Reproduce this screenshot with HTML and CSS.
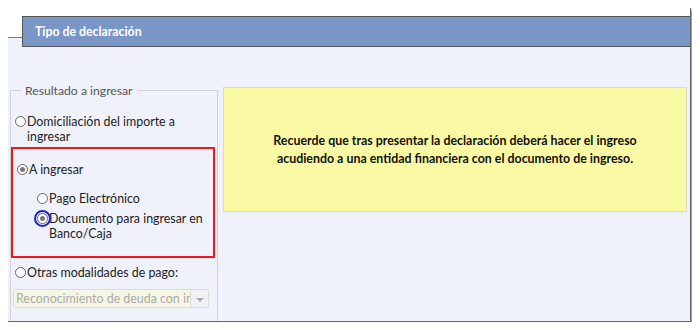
FILE: index.html
```html
<!DOCTYPE html>
<html>
<head>
  <title>Tipo de declaración</title>
  <link rel="stylesheet" href="styles.css">
</head>
<body>
  <div class="window">
    <div class="tabrow">
      <div class="tab">Tipo de declaración</div>
    </div>
    <div class="content">
      <fieldset class="result">
        <legend>Resultado a ingresar</legend>
        <div class="opt"><span class="radio"></span><span>Domiciliación del importe a ingresar</span></div>
        <div class="highlight">
          <div class="opt"><span class="radio on"></span><span>A ingresar</span></div>
          <div class="sub">
            <div class="opt"><span class="radio"></span><span>Pago Electrónico</span></div>
            <div class="opt"><span class="radio on ring"></span><span>Documento para ingresar en Banco/Caja</span></div>
          </div>
        </div>
        <div class="opt"><span class="radio"></span><span>Otras modalidades de pago:</span></div>
        <div class="select">
          <span class="select-text">Reconocimiento de deuda con in</span>
          <span class="select-arrow"></span>
        </div>
      </fieldset>
      <div class="notice">
        <p>Recuerde que tras presentar la declaración deberá hacer el ingreso<br>acudiendo a una entidad financiera con el documento de ingreso.</p>
      </div>
    </div>
  </div>
</body>
</html>
```

FILE: styles.css
```css
* {
  font-family: 'Lato', 'Open Sans', sans-serif;
  box-sizing: border-box;
}
body {
  margin: 8px;
  background: #fff;
}
.window {
  width: 683px;
  height: 314px;
  background: #eff2fa;
  border-right: 1px solid #666;
  border-bottom: 1px solid #666;
  box-shadow: 2px 2px 2px #999;
  overflow: hidden;
}
.tabrow {
  height: 39px;
  padding: 8px 0 0 14px;
  background: linear-gradient(#fff 29px, #777 29px, #777 30px, transparent 30px);
  display: flex;
}
.tab {
  flex: 1;
  height: 31px;
  background: #7a96c7;
  border: 1px solid #555;
  border-right: none;
  color: #fff;
  font-weight: bold;
  font-size: 12.3px;
  padding: 7px 0 0 12px;
}
.content {
  display: flex;
  gap: 5px;
  padding: 40px 3px 0 2px;
}
.result {
  width: 208px;
  margin: -4px 0 0 0;
  padding: 6px 0 0 4px;
  border: 1px solid #d0d3da;
  height: 270px;
  min-width: 0;
}
.result legend {
  color: #555;
  font-size: 12.2px;
  padding: 0 4px;
  margin-left: 6px;
}
.opt {
  display: flex;
  align-items: flex-start;
  font-size: 12.4px;
  line-height: 15px;
  color: #222;
}
.radio {
  flex: none;
  width: 11px;
  height: 11px;
  margin-top: 2px;
  margin-right: 1px;
  border: 1px solid #666;
  border-radius: 50%;
  background: #fff;
  position: relative;
}
.radio.on::after {
  content: '';
  position: absolute;
  left: 2px;
  top: 2px;
  width: 5px;
  height: 5px;
  border-radius: 50%;
  background: #777;
}
.radio.ring::before {
  content: '';
  position: absolute;
  left: -4px;
  top: -4px;
  width: 13px;
  height: 13px;
  border: 2px solid #1a22d8;
  border-radius: 50%;
}
.result > .opt:first-of-type {
  margin-top: 10px;
}
.highlight {
  margin: 3px 0 7px -4px;
  width: 204px;
  height: 111px;
  border: 2px solid #f01818;
  padding: 13px 0 0 4px;
}
.sub {
  margin-top: 14px;
  padding-left: 20px;
  display: flex;
  flex-direction: column;
  gap: 5px;
}
.select {
  display: flex;
  margin: 9px 0 0 -2px;
  width: 196px;
  height: 19px;
  border: 1px solid #dcdcd4;
  border-radius: 2px;
}
.select-text {
  flex: 1;
  background: #f6f6e4;
  color: #aaa;
  font-size: 12.4px;
  line-height: 17px;
  padding-left: 2px;
  white-space: nowrap;
  overflow: hidden;
  border-right: 1px solid #dcdcd4;
}
.select-arrow {
  width: 17px;
  position: relative;
  background: #f0f1f5;
}
.select-arrow::after {
  content: '';
  position: absolute;
  left: 5px;
  top: 8px;
  border-left: 4px solid transparent;
  border-right: 4px solid transparent;
  border-top: 4px solid #aaa;
}
.notice {
  flex: 1;
  height: 125px;
  background: #fbfaa4;
  border: 1px solid #dcdcc0;
  display: flex;
  align-items: center;
  justify-content: center;
}
.notice p {
  margin: 0;
  text-align: center;
  font-weight: bold;
  font-size: 12.4px;
  line-height: 18px;
  color: #111;
}
```
